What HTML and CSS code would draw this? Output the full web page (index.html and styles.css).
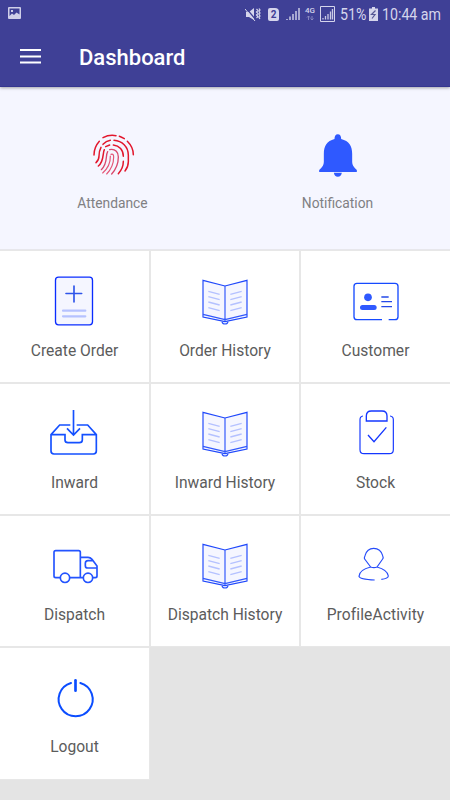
FILE: index.html
```html
<!DOCTYPE html>
<html lang="en">
<head>
<meta charset="utf-8">
<title>Dashboard</title>
<link rel="stylesheet" href="styles.css">
</head>
<body>
<svg class="defs" width="0" height="0">
  <symbol id="book" viewBox="4.5 33 444 240">
    <path d="M159 121L225 138L291 121V231L225 245L159 231Z" fill="#f5f6ff" stroke="#1e47fb" stroke-width="3.5"/>
    <path d="M225 138V243M159 223L225 239L291 223M216 245Q217 252 225 252Q233 252 234 245" fill="none" stroke="#3158fc" stroke-width="3.5"/>
    <path d="M175 154L209 163M175 170L209 179M175 186L209 195M175 203L209 212M275 154L241 163M275 170L241 179M275 186L241 195M275 203L241 212" stroke="#b4c1ff" stroke-width="4"/>
  </symbol>
</svg>
<header class="top">
  <div class="status">
    <svg class="picture" width="14" height="13" viewBox="0 0 14 13"><path fill="#cfcfe9" fill-rule="evenodd" d="M1 0H12Q13 0 13 1V11Q13 12 12 12H1Q0 12 0 11V1Q0 0 1 0ZM1.500 1.500V9L4 6.500L6 8L8.500 5.500L11.500 7.500V1.500ZM3 3H5V5H3Z"/></svg>
    <div class="status-right">
      <svg width="16" height="15" viewBox="0 0 16 15"><path fill="#d5d5ec" d="M1 5H4L9 1V13L4 10H1Z"/><path d="M1 1L11 13" stroke="#3f4096" stroke-width="1.200"/><path d="M0 2L10 14" stroke="#d5d5ec" stroke-width="1"/><path d="M11.500 2L13 3.500L11.500 5L13 6.500L11.500 8L13 9.500L11.500 11M14 1.500L15 3L14 4.500L15 6L14 7.500L15 9L14 10.500L15 12" fill="none" stroke="#d5d5ec" stroke-width="1.200"/></svg>
      <span class="sim">2</span>
      <svg class="signal" width="14" height="14" viewBox="0 0 14 14"><path d="M1 13V12M4 13V9.500M7 13V7M10 13V4M13 13V1" stroke="#c9c9e5" stroke-width="1.500"/></svg>
      <span class="network"><b>4G</b><svg width="8" height="6" viewBox="0 0 8 6"><path d="M2.500 5V1M1 2.500L2.500 1L4 2.500M6 1V5M4.500 3.500L6 5L7.500 3.500" fill="none" stroke="#8b8bc2" stroke-width=".9"/></svg></span>
      <svg class="boxed" width="15" height="16" viewBox="0 0 15 16"><path d="M.5 .5H14.500V15.500H.5Z" fill="none" stroke="#d5d5ec"/><path d="M3 13.500V12M5.500 13.500V10M8 13.500V8M10.500 13.500V5.500M12.500 13.500V3" stroke="#c9c9e5" stroke-width="1.300"/></svg>
      <span class="percent"><span class="narrow">51%</span></span>
      <svg class="battery" width="9" height="14" viewBox="0 0 9 14"><path fill="#d5d5ec" d="M3 0H6V1.500H9V14H0V1.500H3Z"/><path d="M6.500 3.500L2.500 7.500H6L3 11.500" fill="none" stroke="#565795" stroke-width="1.200"/></svg>
      <span class="time"><span class="narrow">10:44 am</span></span>
    </div>
  </div>
  <div class="bar">
    <svg width="21" height="15" viewBox="0 0 21 15"><path d="M0 1H21M0 7.500H21M0 13.500H21" stroke="#fff" stroke-width="2"/></svg>
    <h1>Dashboard</h1>
  </div>
</header>
<section class="quick">
  <div class="quick-item">
    <svg width="90" height="62" viewBox="-5 30 270 186" fill="none" stroke="#e2172d" stroke-width="4.500" stroke-linecap="round">
      <path d="M100 53Q119 43 139 47M149 49Q155 51 164 56M89 64Q73 82 73 105M173 64Q191 82 191 104"/>
      <path d="M100 73Q109 63 122 61M133 61C157 63 176 80 176 106V125Q176 140 166 153M94 82Q88 93 88 108Q88 120 79 128"/>
      <path d="M108 80L120 75M131 75C149 77 161 90 161 109M161 124Q161 145 146 161M104 89C98 101 104 124 86 138"/>
      <path d="M120 89Q132 86 140 94Q146 100 146 111Q146 140 126 162M114 95C106 108 116 129 95 149" stroke="#d9486c" stroke-width="4"/>
      <path d="M124 103Q132 100 132 111Q132 140 111 162M122 108Q123 138 99 159" stroke="#e45576" stroke-width="3.500"/>
    </svg>
    <span>Attendance</span>
  </div>
  <div class="quick-item">
    <svg width="90" height="62" viewBox="9.500 30 270 186" fill="#2f59ff"><path d="M144 43Q154 43 154 57C178 63 187 79 187 101V126Q187 139 201 150V156H88V150Q102 139 102 126V101C102 79 111 63 134 57Q134 43 144 43ZM132 158H156Q154 170 144 170Q134 170 132 158Z"/></svg>
    <span>Notification</span>
  </div>
</section>
<main class="grid">
  <div class="tile first-row">
    <svg viewBox="0 33 447 240"><rect x="166.500" y="111.500" width="111" height="143" rx="9" fill="#f5f6ff" stroke="#0a2cff" stroke-width="4"/><path d="M222 138V186M198 160.500H245" stroke="#2f55ea" stroke-width="5" stroke-linecap="round"/><path d="M189 212H256M189 229H256" stroke="#b6c2ff" stroke-width="6.500" stroke-linecap="round"/></svg>
    <span>Create Order</span>
  </div>
  <div class="tile first-row"><svg><use href="#book"/></svg><span>Order History</span></div>
  <div class="tile first-row">
    <svg viewBox="3 33 447 240"><path d="M246 239H171Q162 239 162 230V139Q162 130 171 130H285Q294 130 294 139V230Q294 239 285 239H266" fill="none" stroke="#164aff" stroke-width="4"/><circle cx="204" cy="172" r="11.500" fill="#2f59ff"/><rect x="180" y="195" width="50" height="15" rx="7.500" fill="#2f59ff"/><path d="M244 171H266M244 185H276M244 200H276" stroke="#2449e8" stroke-width="4"/></svg>
    <span>Customer</span>
  </div>
  <div class="tile">
    <svg viewBox="0 12 447 240" fill="none" stroke="#1450ff" stroke-width="5"><path d="M211 135H179L153 164V213Q153 222 162 222H280Q289 222 289 213V164L263 135H230M153 164H195V180Q195 188 204 188H238Q247 188 247 180V164H289M220.500 90V163M201 145L220.500 165L240 145"/></svg>
    <span>Inward</span>
  </div>
  <div class="tile"><svg class="raised"><use href="#book"/></svg><span>Inward History</span></div>
  <div class="tile">
    <svg viewBox="3 12 447 240" fill="none" stroke="#1437ff"><path d="M199 123V108Q199 93 214 93H246Q261 93 261 108V123Z" stroke-width="4"/><path d="M189 108Q180 109 180 119V209Q180 221 192 221H268Q280 221 280 209V119Q280 109 270 108" stroke-width="3.500"/><path d="M204 165L222 185L259 142" stroke-width="4"/></svg>
    <span>Stock</span>
  </div>
  <div class="tile">
    <svg viewBox="0 18 447 240" fill="none" stroke="#2454ff" stroke-width="5"><path d="M180 203H167Q162 203 162 198V127Q162 122 167 122H236Q241 122 241 127V203M210 203H249M241 142H264Q271 142 276 148L291 168V198Q291 203 286 203H279M279 152H264Q256 152 256 160V167Q256 174 264 174H291"/><circle cx="195" cy="203.500" r="14"/><circle cx="264" cy="203.500" r="14"/></svg>
    <span>Dispatch</span>
  </div>
  <div class="tile"><svg class="raised"><use href="#book"/></svg><span>Dispatch History</span></div>
  <div class="tile">
    <svg viewBox="3 18 447 240" fill="none" stroke="#274dfa" stroke-width="3.500"><path d="M212 171L194 147Q192 143 195 137Q201 115 221 115Q242 115 248 137Q251 143 248 147L231 171Q222 175 212 171Q178 179 177 199Q179 208 224 210M231 171Q262 179 265 198Q264 206 244 208"/></svg>
    <span class="wide">ProfileActivity</span>
  </div>
  <div class="tile">
    <svg viewBox="0 24 447 240" fill="none" stroke="#0b4dff" stroke-width="6" stroke-linecap="round"><path d="M213 129A51 51 0 1 0 241 129"/><path d="M226.500 121V152" stroke-width="8"/></svg>
    <span>Logout</span>
  </div>
</main>
</body>
</html>
```
FILE: styles.css
```css
* { box-sizing: border-box; }
body {
  margin: 0;
  width: 450px;
  height: 800px;
  overflow: hidden;
  background: #e4e4e4;
  font-family: Roboto, sans-serif;
}
svg { display: block; }
.defs { position: absolute; }
.top {
  position: relative;
  height: 87px;
  background: #3f4096;
  border-bottom: 1px solid #35368f;
  box-shadow: 0 1px 3px rgba(0, 0, 0, .35);
  color: #fff;
}
.status {
  height: 28px;
  display: flex;
  justify-content: space-between;
  align-items: center;
  padding: 0 9px 0 8px;
}
.picture { margin-top: -2px; }
.status-right {
  display: flex;
  align-items: center;
  color: #d5d5ec;
  font-size: 16.5px;
}
.sim {
  width: 11px;
  height: 13px;
  margin-left: 7px;
  border-radius: 2px 4px 2px 2px;
  background: #d5d5ec;
  color: #3f4096;
  font-size: 10px;
  font-weight: 700;
  line-height: 13px;
  text-align: center;
}
.signal { margin-left: 7px; }
.network {
  width: 11px;
  margin-left: 5px;
  font-size: 8px;
  line-height: 8px;
}
.network b { display: block; font-weight: 500; }
.network svg { margin-left: 1px; }
.boxed { margin-left: 4px; }
.percent { width: 25px; margin-left: 5px; }
.battery { margin-left: 4px; }
.time { width: 59px; margin-left: 4px; white-space: nowrap; }
.narrow {
  display: inline-block;
  transform: scaleX(.86);
  transform-origin: left center;
}
.bar {
  height: 58px;
  display: flex;
  align-items: center;
  gap: 38px;
  padding-left: 20px;
}
.bar svg { margin-top: -1px; }
.bar h1 {
  margin: 2px 0 0;
  font-size: 22px;
  font-weight: 500;
  line-height: 28px;
}
.quick {
  height: 164px;
  display: grid;
  grid-template-columns: 1fr 1fr;
  padding-top: 43px;
  background: #f5f6ff;
  border-bottom: 2px solid #e7e7ec;
}
.quick-item {
  display: flex;
  flex-direction: column;
  align-items: center;
  gap: 1px;
  color: #808083;
  font-size: 13.8px;
  line-height: 20px;
}
.grid {
  display: grid;
  grid-template-columns: 149px 148px 149px;
  grid-template-rows: 131px 130px 130px 131px;
  gap: 2px;
}
.tile {
  background: #fff;
  box-shadow: 0 0 0 1px #e7e7e7;
  color: #5c5c5c;
  font-size: 15.6px;
  line-height: 20px;
  text-align: center;
}
.tile svg { width: 149px; height: 80px; margin-bottom: 9px; }
.tile use { width: 148px; height: 80px; }
.tile .wide { letter-spacing: .1px; }
.first-row svg { margin-bottom: 10px; }
.tile .raised { margin-top: -1px; margin-bottom: 10px; }
```
